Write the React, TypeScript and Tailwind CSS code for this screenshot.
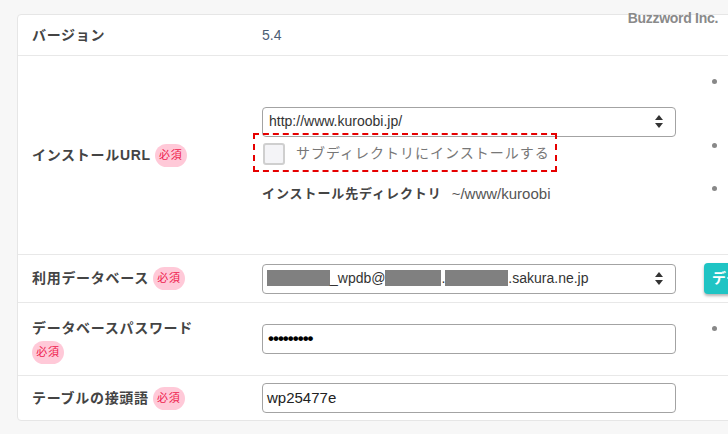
const SANS = 'font-["Liberation_Sans","Noto_Sans_CJK_JP",sans-serif]';

const Badge = () => (
  <span className="inline-flex items-center justify-center h-[23px] w-[32px] rounded-full bg-[#ffc9d8] text-[#ee1a4c] text-[11px] font-normal align-middle">
    必須
  </span>
);

const Arrows = () => (
  <svg width="8" height="13" viewBox="0 0 8 13" className="shrink-0">
    <path d="M4 0 L8 5 L0 5 Z" fill="#333" />
    <path d="M0 8 L8 8 L4 13 Z" fill="#333" />
  </svg>
);

const Redact = ({ w }: { w: number }) => (
  <span className="inline-block h-[16px] bg-[#808080] align-[-3px]" style={{ width: w }} />
);

const Bullet = ({ children }: { children: React.ReactNode }) => (
  <li className="flex gap-[8px] items-start">
    <span className="mt-[8px] w-[5px] h-[5px] rounded-full bg-[#888] shrink-0" />
    <span className="text-[13px] leading-[21px] text-[#c8964e] whitespace-nowrap">{children}</span>
  </li>
);

export default function App() {
  return (
    <div className={`relative w-[728px] h-[434px] overflow-hidden bg-[#f7f7f7] ${SANS}`}>
      <div className="absolute top-[8px] right-[10px] text-[14px] font-semibold tracking-[-0.3px] text-[#8a8a8a] z-10">
        Buzzword Inc.
      </div>

      <div className="ml-[17px] mt-[14px] w-[820px] bg-white border border-[#e6e6e6] rounded-[4px]">
        {/* version */}
        <div className="flex items-center h-[40px]">
          <div className="w-[244px] shrink-0 pl-[14px] text-[14px] font-bold text-[#444] tracking-[0.05em]">バージョン</div>
          <div className="text-[14px] text-[#4b5d75]">5.4</div>
        </div>

        {/* install url */}
        <div className="flex items-center h-[199px] border-t border-[#e8e8e8]">
          <div className="w-[244px] shrink-0 pl-[14px] flex items-center gap-[4px] text-[14px] font-bold text-[#444] tracking-[0.05em]">
            インストールURL <Badge />
          </div>
          <div className="w-[414px] shrink-0 flex flex-col">
            <div className="h-[30px] border border-[#a3a3a3] rounded-[4px] flex items-center justify-between pl-[6px] pr-[12px] text-[14px] text-[#333]">
              <span>http://www.kuroobi.jp/</span>
              <Arrows />
            </div>
            <div className="relative mt-[6px] h-[22px] flex items-center pl-[1px]">
              <span className="w-[22px] h-[22px] border-2 border-[#cfcfcf] rounded-[3px] bg-[#f4f4f7]" />
              <span className="ml-[11px] text-[14px] text-[#777] tracking-[1px]">サブディレクトリにインストールする</span>
              <span className="absolute left-[-9px] top-[-10px] w-[304px] h-[39px] border-2 border-dashed border-[#e60000]" />
            </div>
            <div className="mt-[19px] flex items-center gap-[10px] leading-[20px]">
              <span className="text-[13px] font-bold text-[#444] tracking-[0.07em]">インストール先ディレクトリ</span>
              <span className="text-[15px] text-[#555]">~/www/kuroobi</span>
            </div>
          </div>
          <ul className="self-start mt-[15px] pl-[36px] flex flex-col gap-[1px]">
            <Bullet>
              <span className="pl-[4px]">サブディレクトリを</span>
              <br />
              <span className="pl-[4px]">指定できます</span>
            </Bullet>
            <div className="h-[20px]" />
            <Bullet>
              <span className="pl-[4px]">URLを選択</span>
              <br />
              <span className="pl-[4px]">してください</span>
            </Bullet>
            <Bullet>
              <span className="pl-[4px]">ディレクトリ</span>
            </Bullet>
          </ul>
        </div>

        {/* database */}
        <div className="flex items-center h-[48px] border-t border-[#e8e8e8]">
          <div className="w-[244px] shrink-0 pl-[14px] flex items-center gap-[4px] text-[14px] font-bold text-[#444] tracking-[0.05em]">
            利用データベース <Badge />
          </div>
          <div className="w-[414px] shrink-0 h-[30px] border border-[#a3a3a3] rounded-[4px] flex items-center justify-between pl-[4px] pr-[12px] text-[14px] text-[#333]">
            <span className="whitespace-nowrap">
              <Redact w={63} />_wpdb@<Redact w={56} />.<Redact w={63} />.sakura.ne.jp
            </span>
            <Arrows />
          </div>
          <div className="ml-[28px] h-[31px] px-[8px] rounded-[4px] bg-[#1fc4c4] text-white font-bold text-[14px] flex items-center shadow-[0_2px_3px_rgba(0,0,0,0.3)] whitespace-nowrap">
            データベース作成
          </div>
        </div>

        {/* password */}
        <div className="flex items-center h-[73px] border-t border-[#e8e8e8]">
          <div className="w-[244px] shrink-0 pl-[14px] text-[14px] font-bold text-[#444] tracking-[0.05em]">
            <div className="leading-[26px]">データベースパスワード</div>
            <Badge />
          </div>
          <div className="w-[414px] shrink-0 h-[30px] border border-[#a3a3a3] rounded-[4px] flex items-center pl-[5px] text-[17px] text-black font-bold tracking-[-1px]">
            •••••••••
          </div>
          <ul className="self-start mt-[15px] pl-[36px]">
            <Bullet>
              <span className="pl-[4px]">パスワード</span>
            </Bullet>
          </ul>
        </div>

        {/* prefix */}
        <div className="flex items-center h-[45px] border-t border-[#e8e8e8]">
          <div className="w-[244px] shrink-0 pl-[14px] flex items-center gap-[4px] text-[14px] font-bold text-[#444] tracking-[0.05em]">
            テーブルの接頭語 <Badge />
          </div>
          <div className="w-[414px] shrink-0 h-[30px] border border-[#a3a3a3] rounded-[4px] flex items-center pl-[4px] text-[15px] text-[#222]">
            wp25477e
          </div>
        </div>
      </div>
    </div>
  );
}
